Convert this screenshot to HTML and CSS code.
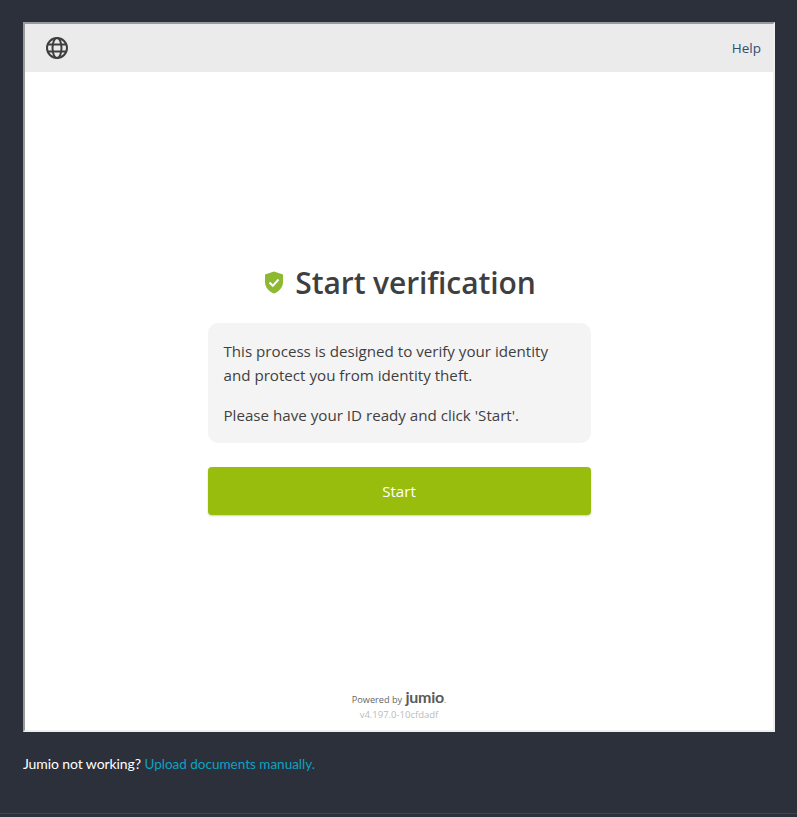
FILE: index.html
```html
<!DOCTYPE html>
<html lang="en">
<head>
  <meta charset="UTF-8" />
  <meta name="viewport" content="width=device-width, initial-scale=1.0" />
  <title>Start verification</title>
  <link rel="stylesheet" href="styles.css">
</head>
<body>
  <div class="frame">
    <div class="topbar">
      <svg class="globe" width="24" height="24" viewBox="0 0 24 24" fill="none" stroke="#3f3f3f" stroke-width="2">
        <circle cx="12" cy="12" r="10"/>
        <ellipse cx="12" cy="12" rx="4.5" ry="10"/>
        <path d="M3 8.5h18M3 15.5h18"/>
      </svg>
      <a class="help" href="#">Help</a>
    </div>
    <div class="content">
      <h1 class="title">
        <svg width="20" height="23" viewBox="0 0 20 23">
          <path d="M10 0.5L19 3.5V11C19 16.5 15 20.5 10 22.5C5 20.5 1 16.5 1 11V3.5Z" fill="#8cb92f"/>
          <path d="M5.5 11.5L8.8 14.8L14.5 8.5" fill="none" stroke="#fff" stroke-width="2"/>
        </svg>
        Start verification
      </h1>
      <div class="info-box">
        <p>This process is designed to verify your identity and protect you from identity theft.</p>
        <p>Please have your ID ready and click 'Start'.</p>
      </div>
      <button class="start-btn">Start</button>
    </div>
    <div class="powered">
      <div class="powered-line">Powered by <span class="brand">jumio</span><span class="brand-dot">.</span></div>
      <div class="version">v4.197.0-10cfdadf</div>
    </div>
  </div>
  <p class="manual"><span class="manual-q">Jumio not working?</span> <a href="#">Upload documents manually.</a></p>
  <div class="page-rule"></div>
</body>
</html>
```

FILE: styles.css
```css
html, body { height: 100%; }
body { margin: 0; padding: 22px 22px 0 23px; box-sizing: border-box; background: #2b303a; color: #fff; font-family: Lato, Arial, sans-serif; display: flex; flex-direction: column; overflow: hidden; }
.frame { width: 752px; height: 710px; box-sizing: border-box; flex: none; display: flex; flex-direction: column; background: #fff; border: 2px solid; border-color: #9a9a9a #eee #eee #9a9a9a; font-family: "Open Sans", Arial, sans-serif; color: #3f3f3f; }
.topbar { height: 48px; flex: none; display: flex; justify-content: space-between; align-items: center; padding: 0 12px 0 20px; background: #ebebeb; }
.globe { display: block; }
.help { color: #2f4f6f; font-size: 13.5px; text-decoration: none; }
.content { flex: 1; display: flex; flex-direction: column; align-items: center; padding-top: 188px; }
.title { margin: 0 0 19px 2px; height: 44px; display: flex; align-items: center; gap: 11px; font-size: 30px; font-weight: 600; letter-spacing: -0.1px; color: #3f3f3f; }
.info-box { width: 383px; height: 120px; box-sizing: border-box; padding: 16px 30px 16px 16px; background: #f4f4f4; border-radius: 10px; font-size: 15.15px; line-height: 24px; }
.info-box p { margin: 0 0 16px; }
.info-box p:last-child { margin-bottom: 0; }
.start-btn { width: 383px; height: 48px; margin-top: 24px; border: none; border-radius: 4px; background: #98bd0c; color: #fff; font-family: inherit; font-size: 15.15px; box-shadow: 0 1px 2px rgba(0,0,0,0.2); }
.powered { flex: none; padding-bottom: 9px; text-align: center; }
.powered-line { font-size: 9.2px; line-height: 16px; color: #666; }
.brand { font-family: Lato, Arial, sans-serif; font-size: 16px; font-weight: 700; letter-spacing: -0.3px; color: #5a5a5a; margin-left: 1px; }
.brand-dot { color: #888; }
.version { font-size: 9.5px; line-height: 13px; color: #bbb; }
.manual { margin: 22px 0 0; font-size: 14px; line-height: 20px; }
.manual-q { letter-spacing: -0.1px; }
.manual a { color: #0ba3c4; font-size: 13.5px; text-decoration: none; }
.page-rule { margin: auto -22px 3px -23px; height: 1px; background: #3f444d; }
```
